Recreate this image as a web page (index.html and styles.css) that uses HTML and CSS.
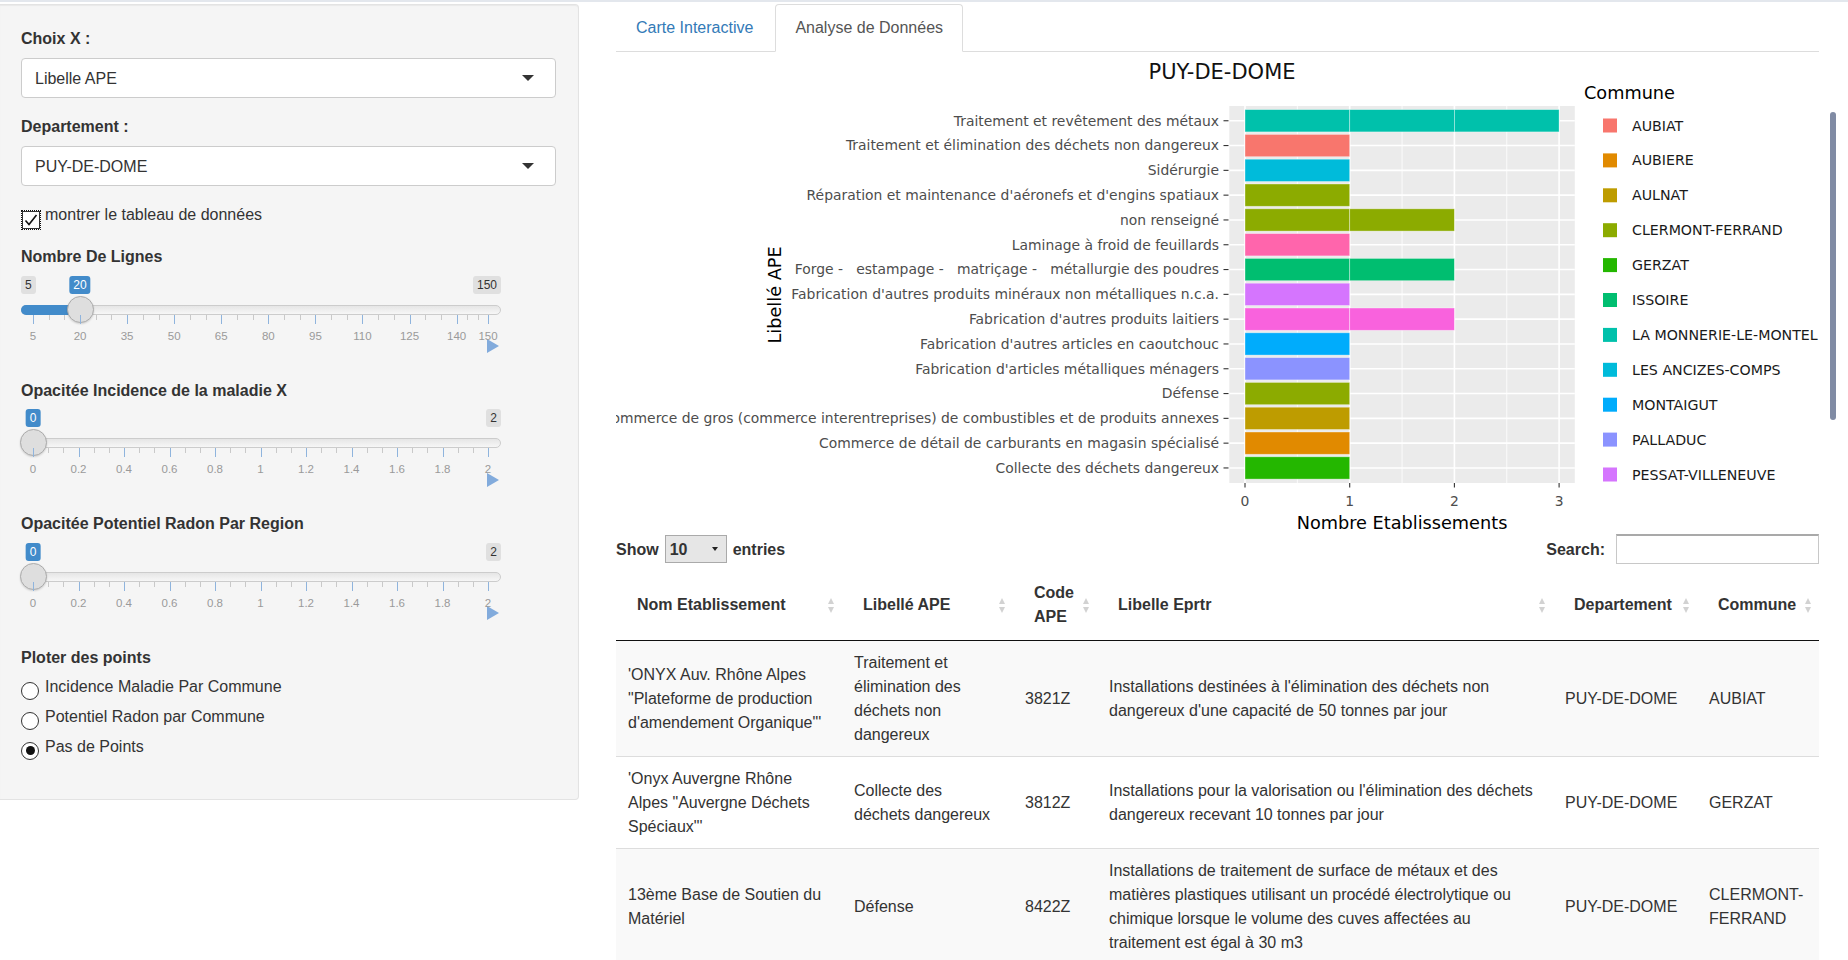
FILE: index.html
```html
<!DOCTYPE html>
<html lang="fr">
<head>
<meta charset="utf-8">
<title>Analyse de Données</title>
<link rel="stylesheet" href="styles.css">
</head>
<body>
<div class="page">
  <aside class="sidebar">
    <div class="fg">
      <div class="ctl-label">Choix X :</div>
      <div class="select"><span>Libelle APE</span><i class="caret"></i></div>
    </div>
    <div class="fg">
      <div class="ctl-label">Departement :</div>
      <div class="select"><span>PUY-DE-DOME</span><i class="caret"></i></div>
    </div>
    <div class="check-row">
      <span class="cbox"><svg width="16" height="16" viewBox="0 0 16 16"><path d="M2.5 8.5 L6 12.5 L13.5 3" fill="none" stroke="#111" stroke-width="1.6"/></svg></span>
      <span>montrer le tableau de données</span>
    </div>

    <div class="slider-group">
      <div class="ctl-label">Nombre De Lignes</div>
      <div class="irs">
        <span class="irs-min">5</span>
        <span class="irs-max">150</span>
        <span class="irs-line"></span>
        <span class="irs-bar" style="width:59px"></span>
        <span class="irs-single" style="left:59px">20</span>
        <span class="irs-handle" style="left:45.5px"></span>
        <div class="irs-grid">
          <i class="pol big" style="left:0%"></i><span class="gt" style="left:0%">5</span>
          <i class="pol" style="left:3.448%"></i><i class="pol" style="left:6.897%"></i>
          <i class="pol big" style="left:10.345%"></i><span class="gt" style="left:10.345%">20</span>
          <i class="pol" style="left:13.793%"></i><i class="pol" style="left:17.241%"></i>
          <i class="pol big" style="left:20.69%"></i><span class="gt" style="left:20.69%">35</span>
          <i class="pol" style="left:24.138%"></i><i class="pol" style="left:27.586%"></i>
          <i class="pol big" style="left:31.034%"></i><span class="gt" style="left:31.034%">50</span>
          <i class="pol" style="left:34.483%"></i><i class="pol" style="left:37.931%"></i>
          <i class="pol big" style="left:41.379%"></i><span class="gt" style="left:41.379%">65</span>
          <i class="pol" style="left:44.828%"></i><i class="pol" style="left:48.276%"></i>
          <i class="pol big" style="left:51.724%"></i><span class="gt" style="left:51.724%">80</span>
          <i class="pol" style="left:55.172%"></i><i class="pol" style="left:58.621%"></i>
          <i class="pol big" style="left:62.069%"></i><span class="gt" style="left:62.069%">95</span>
          <i class="pol" style="left:65.517%"></i><i class="pol" style="left:68.966%"></i>
          <i class="pol big" style="left:72.414%"></i><span class="gt" style="left:72.414%">110</span>
          <i class="pol" style="left:75.862%"></i><i class="pol" style="left:79.31%"></i>
          <i class="pol big" style="left:82.759%"></i><span class="gt" style="left:82.759%">125</span>
          <i class="pol" style="left:86.207%"></i><i class="pol" style="left:89.655%"></i>
          <i class="pol big" style="left:93.103%"></i><span class="gt" style="left:93.103%">140</span>
          <i class="pol" style="left:95.402%"></i><i class="pol" style="left:97.701%"></i>
          <i class="pol big" style="left:100%"></i><span class="gt" style="left:100%">150</span>
        </div>
      </div>
      <div class="play"><svg width="12" height="14" viewBox="0 0 12 14"><path d="M0 0 L12 7 L0 14 Z"/></svg></div>
    </div>

    <div class="slider-group">
      <div class="ctl-label">Opacitée Incidence de la maladie X</div>
      <div class="irs">
        <span class="irs-max">2</span>
        <span class="irs-line"></span>
        <span class="irs-single" style="left:12px">0</span>
        <span class="irs-handle" style="left:-1.5px"></span>
        <div class="irs-grid">
          <i class="pol big" style="left:0%"></i><span class="gt" style="left:0%">0</span>
          <i class="pol" style="left:3.333%"></i><i class="pol" style="left:6.667%"></i>
          <i class="pol big" style="left:10%"></i><span class="gt" style="left:10%">0.2</span>
          <i class="pol" style="left:13.333%"></i><i class="pol" style="left:16.667%"></i>
          <i class="pol big" style="left:20%"></i><span class="gt" style="left:20%">0.4</span>
          <i class="pol" style="left:23.333%"></i><i class="pol" style="left:26.667%"></i>
          <i class="pol big" style="left:30%"></i><span class="gt" style="left:30%">0.6</span>
          <i class="pol" style="left:33.333%"></i><i class="pol" style="left:36.667%"></i>
          <i class="pol big" style="left:40%"></i><span class="gt" style="left:40%">0.8</span>
          <i class="pol" style="left:43.333%"></i><i class="pol" style="left:46.667%"></i>
          <i class="pol big" style="left:50%"></i><span class="gt" style="left:50%">1</span>
          <i class="pol" style="left:53.333%"></i><i class="pol" style="left:56.667%"></i>
          <i class="pol big" style="left:60%"></i><span class="gt" style="left:60%">1.2</span>
          <i class="pol" style="left:63.333%"></i><i class="pol" style="left:66.667%"></i>
          <i class="pol big" style="left:70%"></i><span class="gt" style="left:70%">1.4</span>
          <i class="pol" style="left:73.333%"></i><i class="pol" style="left:76.667%"></i>
          <i class="pol big" style="left:80%"></i><span class="gt" style="left:80%">1.6</span>
          <i class="pol" style="left:83.333%"></i><i class="pol" style="left:86.667%"></i>
          <i class="pol big" style="left:90%"></i><span class="gt" style="left:90%">1.8</span>
          <i class="pol" style="left:93.333%"></i><i class="pol" style="left:96.667%"></i>
          <i class="pol big" style="left:100%"></i><span class="gt" style="left:100%">2</span>
        </div>
      </div>
      <div class="play"><svg width="12" height="14" viewBox="0 0 12 14"><path d="M0 0 L12 7 L0 14 Z"/></svg></div>
    </div>

    <div class="slider-group">
      <div class="ctl-label">Opacitée Potentiel Radon Par Region</div>
      <div class="irs">
        <span class="irs-max">2</span>
        <span class="irs-line"></span>
        <span class="irs-single" style="left:12px">0</span>
        <span class="irs-handle" style="left:-1.5px"></span>
        <div class="irs-grid">
          <i class="pol big" style="left:0%"></i><span class="gt" style="left:0%">0</span>
          <i class="pol" style="left:3.333%"></i><i class="pol" style="left:6.667%"></i>
          <i class="pol big" style="left:10%"></i><span class="gt" style="left:10%">0.2</span>
          <i class="pol" style="left:13.333%"></i><i class="pol" style="left:16.667%"></i>
          <i class="pol big" style="left:20%"></i><span class="gt" style="left:20%">0.4</span>
          <i class="pol" style="left:23.333%"></i><i class="pol" style="left:26.667%"></i>
          <i class="pol big" style="left:30%"></i><span class="gt" style="left:30%">0.6</span>
          <i class="pol" style="left:33.333%"></i><i class="pol" style="left:36.667%"></i>
          <i class="pol big" style="left:40%"></i><span class="gt" style="left:40%">0.8</span>
          <i class="pol" style="left:43.333%"></i><i class="pol" style="left:46.667%"></i>
          <i class="pol big" style="left:50%"></i><span class="gt" style="left:50%">1</span>
          <i class="pol" style="left:53.333%"></i><i class="pol" style="left:56.667%"></i>
          <i class="pol big" style="left:60%"></i><span class="gt" style="left:60%">1.2</span>
          <i class="pol" style="left:63.333%"></i><i class="pol" style="left:66.667%"></i>
          <i class="pol big" style="left:70%"></i><span class="gt" style="left:70%">1.4</span>
          <i class="pol" style="left:73.333%"></i><i class="pol" style="left:76.667%"></i>
          <i class="pol big" style="left:80%"></i><span class="gt" style="left:80%">1.6</span>
          <i class="pol" style="left:83.333%"></i><i class="pol" style="left:86.667%"></i>
          <i class="pol big" style="left:90%"></i><span class="gt" style="left:90%">1.8</span>
          <i class="pol" style="left:93.333%"></i><i class="pol" style="left:96.667%"></i>
          <i class="pol big" style="left:100%"></i><span class="gt" style="left:100%">2</span>
        </div>
      </div>
      <div class="play"><svg width="12" height="14" viewBox="0 0 12 14"><path d="M0 0 L12 7 L0 14 Z"/></svg></div>
    </div>

    <div class="radio-group">
      <div class="ctl-label radio-title">Ploter des points</div>
      <div class="radio-row"><span class="rdot"></span><span>Incidence Maladie Par Commune</span></div>
      <div class="radio-row"><span class="rdot"></span><span>Potentiel Radon par Commune</span></div>
      <div class="radio-row"><span class="rdot on"></span><span>Pas de Points</span></div>
    </div>
  </aside>

  <main class="main">
    <ul class="tabs">
      <li class="tab">Carte Interactive</li>
      <li class="tab active">Analyse de Données</li>
    </ul>

    <svg class="plot" width="1232" height="482" viewBox="616 52 1232 482">
      <text class="ptitle" x="1222" y="79" text-anchor="middle">PUY-DE-DOME</text>
      <rect x="1229.3" y="106" width="345.5" height="377" fill="#EBEBEB"/>
      <g stroke="#ffffff" stroke-width="0.8">
        <line x1="1297.35" y1="106" x2="1297.35" y2="483"/>
        <line x1="1402.05" y1="106" x2="1402.05" y2="483"/>
        <line x1="1506.75" y1="106" x2="1506.75" y2="483"/>
      </g>
      <g stroke="#ffffff" stroke-width="1.6">
        <line x1="1245" y1="106" x2="1245" y2="483"/>
        <line x1="1349.7" y1="106" x2="1349.7" y2="483"/>
        <line x1="1454.4" y1="106" x2="1454.4" y2="483"/>
        <line x1="1559.1" y1="106" x2="1559.1" y2="483"/>
        <line x1="1229.3" y1="120.75" x2="1574.8" y2="120.75"/>
        <line x1="1229.3" y1="145.55" x2="1574.8" y2="145.55"/>
        <line x1="1229.3" y1="170.35" x2="1574.8" y2="170.35"/>
        <line x1="1229.3" y1="195.15" x2="1574.8" y2="195.15"/>
        <line x1="1229.3" y1="219.95" x2="1574.8" y2="219.95"/>
        <line x1="1229.3" y1="244.75" x2="1574.8" y2="244.75"/>
        <line x1="1229.3" y1="269.55" x2="1574.8" y2="269.55"/>
        <line x1="1229.3" y1="294.35" x2="1574.8" y2="294.35"/>
        <line x1="1229.3" y1="319.15" x2="1574.8" y2="319.15"/>
        <line x1="1229.3" y1="343.95" x2="1574.8" y2="343.95"/>
        <line x1="1229.3" y1="368.75" x2="1574.8" y2="368.75"/>
        <line x1="1229.3" y1="393.55" x2="1574.8" y2="393.55"/>
        <line x1="1229.3" y1="418.35" x2="1574.8" y2="418.35"/>
        <line x1="1229.3" y1="443.15" x2="1574.8" y2="443.15"/>
        <line x1="1229.3" y1="467.95" x2="1574.8" y2="467.95"/>
      </g>
      <g class="bars" stroke="rgba(255,255,255,0.45)" stroke-width="0.8">
        <rect x="1245" y="109.6" width="104.7" height="22.3" fill="#00C1AB"/>
        <rect x="1349.7" y="109.6" width="104.7" height="22.3" fill="#00C1AB"/>
        <rect x="1454.4" y="109.6" width="104.7" height="22.3" fill="#00C1AB"/>
        <rect x="1245" y="134.4" width="104.7" height="22.3" fill="#F8766D"/>
        <rect x="1245" y="159.2" width="104.7" height="22.3" fill="#00BBDA"/>
        <rect x="1245" y="184.0" width="104.7" height="22.3" fill="#8CAB00"/>
        <rect x="1245" y="208.8" width="104.7" height="22.3" fill="#8CAB00"/>
        <rect x="1349.7" y="208.8" width="104.7" height="22.3" fill="#8CAB00"/>
        <rect x="1245" y="233.6" width="104.7" height="22.3" fill="#FF65AC"/>
        <rect x="1245" y="258.4" width="104.7" height="22.3" fill="#00BE70"/>
        <rect x="1349.7" y="258.4" width="104.7" height="22.3" fill="#00BE70"/>
        <rect x="1245" y="283.2" width="104.7" height="22.3" fill="#D575FE"/>
        <rect x="1245" y="308.0" width="104.7" height="22.3" fill="#F962DD"/>
        <rect x="1349.7" y="308.0" width="104.7" height="22.3" fill="#F962DD"/>
        <rect x="1245" y="332.8" width="104.7" height="22.3" fill="#00ACFC"/>
        <rect x="1245" y="357.6" width="104.7" height="22.3" fill="#8B93FF"/>
        <rect x="1245" y="382.4" width="104.7" height="22.3" fill="#8CAB00"/>
        <rect x="1245" y="407.2" width="104.7" height="22.3" fill="#BE9C00"/>
        <rect x="1245" y="432.0" width="104.7" height="22.3" fill="#E18A00"/>
        <rect x="1245" y="456.8" width="104.7" height="22.3" fill="#24B700"/>
      </g>
      <g stroke="#333333" stroke-width="1.1">
        <line x1="1223.5" y1="120.75" x2="1228.5" y2="120.75"/>
        <line x1="1223.5" y1="145.55" x2="1228.5" y2="145.55"/>
        <line x1="1223.5" y1="170.35" x2="1228.5" y2="170.35"/>
        <line x1="1223.5" y1="195.15" x2="1228.5" y2="195.15"/>
        <line x1="1223.5" y1="219.95" x2="1228.5" y2="219.95"/>
        <line x1="1223.5" y1="244.75" x2="1228.5" y2="244.75"/>
        <line x1="1223.5" y1="269.55" x2="1228.5" y2="269.55"/>
        <line x1="1223.5" y1="294.35" x2="1228.5" y2="294.35"/>
        <line x1="1223.5" y1="319.15" x2="1228.5" y2="319.15"/>
        <line x1="1223.5" y1="343.95" x2="1228.5" y2="343.95"/>
        <line x1="1223.5" y1="368.75" x2="1228.5" y2="368.75"/>
        <line x1="1223.5" y1="393.55" x2="1228.5" y2="393.55"/>
        <line x1="1223.5" y1="418.35" x2="1228.5" y2="418.35"/>
        <line x1="1223.5" y1="443.15" x2="1228.5" y2="443.15"/>
        <line x1="1223.5" y1="467.95" x2="1228.5" y2="467.95"/>
        <line x1="1245" y1="483" x2="1245" y2="487.5"/>
        <line x1="1349.7" y1="483" x2="1349.7" y2="487.5"/>
        <line x1="1454.4" y1="483" x2="1454.4" y2="487.5"/>
        <line x1="1559.1" y1="483" x2="1559.1" y2="487.5"/>
      </g>
      <g class="ytick" text-anchor="end">
        <text x="1219" y="125.55">Traitement et revêtement des métaux</text>
        <text x="1219" y="150.35">Traitement et élimination des déchets non dangereux</text>
        <text x="1219" y="175.15">Sidérurgie</text>
        <text x="1219" y="199.95">Réparation et maintenance d'aéronefs et d'engins spatiaux</text>
        <text x="1219" y="224.75">non renseigné</text>
        <text x="1219" y="249.55">Laminage à froid de feuillards</text>
        <text x="1219" y="274.35" class="pre">Forge -   estampage -   matriçage -   métallurgie des poudres</text>
        <text x="1219" y="299.15">Fabrication d'autres produits minéraux non métalliques n.c.a.</text>
        <text x="1219" y="323.95">Fabrication d'autres produits laitiers</text>
        <text x="1219" y="348.75">Fabrication d'autres articles en caoutchouc</text>
        <text x="1219" y="373.55">Fabrication d'articles métalliques ménagers</text>
        <text x="1219" y="398.35">Défense</text>
        <text x="1219" y="423.15">Commerce de gros (commerce interentreprises) de combustibles et de produits annexes</text>
        <text x="1219" y="447.95">Commerce de détail de carburants en magasin spécialisé</text>
        <text x="1219" y="472.75">Collecte des déchets dangereux</text>
      </g>
      <g class="ytick" text-anchor="middle">
        <text x="1245" y="506">0</text>
        <text x="1349.7" y="506">1</text>
        <text x="1454.4" y="506">2</text>
        <text x="1559.1" y="506">3</text>
      </g>
      <text class="atitle" x="1402" y="529" text-anchor="middle">Nombre Etablissements</text>
      <text class="atitle" transform="translate(781 295) rotate(-90)" text-anchor="middle">Libellé APE</text>
      <text class="atitle" x="1584" y="99">Commune</text>
      <g>
        <rect x="1603" y="118.5" width="14" height="14" fill="#F8766D"/>
        <rect x="1603" y="153.4" width="14" height="14" fill="#E18A00"/>
        <rect x="1603" y="188.3" width="14" height="14" fill="#BE9C00"/>
        <rect x="1603" y="223.2" width="14" height="14" fill="#8CAB00"/>
        <rect x="1603" y="258.1" width="14" height="14" fill="#24B700"/>
        <rect x="1603" y="293.0" width="14" height="14" fill="#00BE70"/>
        <rect x="1603" y="327.9" width="14" height="14" fill="#00C1AB"/>
        <rect x="1603" y="362.8" width="14" height="14" fill="#00BBDA"/>
        <rect x="1603" y="397.7" width="14" height="14" fill="#00ACFC"/>
        <rect x="1603" y="432.6" width="14" height="14" fill="#8B93FF"/>
        <rect x="1603" y="467.5" width="14" height="14" fill="#D575FE"/>
      </g>
      <g class="legend">
        <text x="1632" y="130.5">AUBIAT</text>
        <text x="1632" y="165.4">AUBIERE</text>
        <text x="1632" y="200.3">AULNAT</text>
        <text x="1632" y="235.2">CLERMONT-FERRAND</text>
        <text x="1632" y="270.1">GERZAT</text>
        <text x="1632" y="305.0">ISSOIRE</text>
        <text x="1632" y="339.9">LA MONNERIE-LE-MONTEL</text>
        <text x="1632" y="374.8">LES ANCIZES-COMPS</text>
        <text x="1632" y="409.7">MONTAIGUT</text>
        <text x="1632" y="444.6">PALLADUC</text>
        <text x="1632" y="479.5">PESSAT-VILLENEUVE</text>
      </g>
      <rect x="1830" y="112" width="6" height="308" rx="3" fill="#808BA4"/>
    </svg>

    <div class="dt-top">
      <div class="dt-len">Show <span class="dt-select"><span>10</span><i class="mini-caret"></i></span> entries</div>
      <div class="dt-search">Search: <span class="dt-input"></span></div>
    </div>

    <table class="dt">
      <colgroup>
        <col style="width:226px"><col style="width:171px"><col style="width:84px"><col style="width:456px"><col style="width:144px"><col style="width:122px">
      </colgroup>
      <thead>
        <tr>
          <th><div class="th-in"><span>Nom Etablissement</span><i class="sort"></i></div></th>
          <th><div class="th-in"><span>Libellé APE</span><i class="sort"></i></div></th>
          <th><div class="th-in"><span>Code APE</span><i class="sort"></i></div></th>
          <th><div class="th-in"><span>Libelle Eprtr</span><i class="sort"></i></div></th>
          <th><div class="th-in"><span>Departement</span><i class="sort"></i></div></th>
          <th><div class="th-in"><span>Commune</span><i class="sort"></i></div></th>
        </tr>
      </thead>
      <tbody>
        <tr class="odd">
          <td>'ONYX Auv. Rhône Alpes "Plateforme de production d'amendement Organique"'</td>
          <td>Traitement et élimination des déchets non dangereux</td>
          <td>3821Z</td>
          <td>Installations destinées à l'élimination des déchets non dangereux d'une capacité de 50 tonnes par jour</td>
          <td>PUY-DE-DOME</td>
          <td>AUBIAT</td>
        </tr>
        <tr>
          <td>'Onyx Auvergne Rhône Alpes "Auvergne Déchets Spéciaux"'</td>
          <td>Collecte des déchets dangereux</td>
          <td>3812Z</td>
          <td>Installations pour la valorisation ou l'élimination des déchets dangereux recevant 10 tonnes par jour</td>
          <td>PUY-DE-DOME</td>
          <td>GERZAT</td>
        </tr>
        <tr class="odd">
          <td>13ème Base de Soutien du Matériel</td>
          <td>Défense</td>
          <td>8422Z</td>
          <td>Installations de traitement de surface de métaux et des matières plastiques utilisant un procédé électrolytique ou chimique lorsque le volume des cuves affectées au traitement est égal à 30 m3</td>
          <td>PUY-DE-DOME</td>
          <td>CLERMONT-FERRAND</td>
        </tr>
      </tbody>
    </table>
  </main>
</div>
</body>
</html>
```

FILE: styles.css
```css
* { box-sizing: border-box; }
html { overflow: hidden; }
body {
  margin: 0;
  font-family: "Liberation Sans", Arial, sans-serif;
  font-size: 16px;
  line-height: 23px;
  color: #333;
  background: #fff;
  border-top: 2px solid #e3e7ed;
  height: 960px;
  overflow: hidden;
}
.page { display: flex; align-items: flex-start; padding-top: 2px; }

/* Sidebar */
.sidebar {
  width: 579px;
  flex: none;
  background: #f5f5f5;
  border: 1px solid #e3e3e3;
  border-left: none;
  border-radius: 0 4px 4px 0;
  box-shadow: inset 0 1px 1px rgba(0,0,0,.05);
  padding: 22px 21px 34px 21px;
}
.fg { margin-bottom: 17px; }
.ctl-label { font-weight: bold; margin-bottom: 8px; height: 23px; white-space: nowrap; }
.select {
  width: 535px;
  height: 40px;
  background: #fff;
  border: 1px solid #ccc;
  border-radius: 4px;
  display: flex;
  align-items: center;
  justify-content: space-between;
  padding: 0 21px 0 13px;
}
.caret {
  width: 0; height: 0;
  border-left: 6px solid transparent;
  border-right: 6px solid transparent;
  border-top: 6px solid #333;
}
.check-row { display: flex; align-items: flex-start; gap: 4px; margin-bottom: 19px; height: 23px; }
.cbox {
  flex: none;
  width: 20px; height: 20px;
  margin-top: 7px;
  border: 1px dotted #111;
  padding: 1px;
  display: flex; align-items: center; justify-content: center;
  background: #fff;
  box-shadow: inset 0 0 0 1px #333;
}

/* Sliders */
.slider-group { margin-bottom: 25.5px; }
.slider-group .ctl-label { margin-bottom: 7.5px; }
.irs { position: relative; width: 480px; height: 63.5px; }
.irs-min, .irs-max, .irs-single {
  position: absolute; top: 0;
  font-size: 12px; line-height: 16px;
  padding: 1px 4px;
  border-radius: 3px;
}
.irs-min { left: 0; background: #e0e0e0; color: #333; }
.irs-max { right: 0; background: #e0e0e0; color: #333; }
.irs-single { background: #428bca; color: #fff; transform: translateX(-50%); }
.irs-line {
  position: absolute; left: 0; right: 0; top: 29px; height: 10px;
  border: 1px solid #ccc; border-radius: 16px;
  background: linear-gradient(to bottom, #dddddd -50%, #ffffff 150%);
}
.irs-bar {
  position: absolute; left: 0; top: 29px; height: 10px;
  background: #428bca; border-radius: 16px 0 0 16px;
}
.irs-handle {
  position: absolute; top: 20px; width: 27px; height: 27px;
  border-radius: 50%;
  background: #dedede;
  border: 1px solid #ababab;
  box-shadow: 0 1px 2px rgba(0,0,0,.15);
}
.irs-grid { position: absolute; left: 12px; width: 455px; top: 39px; height: 24px; }
.pol { position: absolute; top: 0; width: 1px; height: 5px; background: #c9c9c9; }
.pol.big { height: 9px; background: #8fb4dd; }
.gt {
  position: absolute; top: 14px;
  font-size: 11.5px; line-height: 14px; color: #9a9a9a;
  transform: translateX(-50%);
}
.play { width: 480px; height: 14px; display: flex; justify-content: flex-end; padding-right: 2px; }
.play svg { fill: #82abdc; display: block; }

/* Radios */
.radio-title { margin-bottom: 6px; }
.radio-row { display: flex; align-items: flex-start; gap: 6px; margin-bottom: 7px; white-space: nowrap; height: 23px; }
.rdot {
  flex: none;
  width: 18px; height: 18px;
  margin-top: 7px;
  border-radius: 50%;
  border: 1.5px solid #333;
  background: #fff;
  display: flex; align-items: center; justify-content: center;
}
.rdot.on::after { content: ""; width: 9px; height: 9px; border-radius: 50%; background: #111; }

/* Main */
.main { margin-left: 37px; width: 1203px; flex: none; }
.tabs { display: flex; list-style: none; margin: 0; padding: 0; border-bottom: 1px solid #ddd; }
.tab {
  margin-bottom: -1px; margin-right: 2px;
  padding: 11px 19px 12px;
  line-height: 23px;
  border: 1px solid transparent;
  border-radius: 4px 4px 0 0;
  color: #337ab7;
}
.tab.active { color: #555; background: #fff; border-color: #ddd #ddd transparent; }

.plot { display: block; }
.ptitle { font-family: "DejaVu Sans", Verdana, sans-serif; font-size: 21px; fill: #111; }
.ytick text, .ytick { font-family: "DejaVu Sans", Verdana, sans-serif; font-size: 13.9px; fill: #4d4d4d; }
.pre { white-space: pre; }
.atitle { font-family: "DejaVu Sans", Verdana, sans-serif; font-size: 17.7px; fill: #000; }
.legend { font-family: "DejaVu Sans", Verdana, sans-serif; font-size: 14.2px; fill: #1a1a1a; }

/* DataTable */
.dt-top {
  display: flex; justify-content: space-between; align-items: center;
  height: 30px; font-weight: bold;
}
.dt-len, .dt-search { display: flex; align-items: center; gap: 6px; }
.dt-search { gap: 11px; }
.dt-select {
  width: 62px; height: 28px;
  background: #e6e6e6;
  border: 1px solid #aaa;
  display: flex; align-items: center; justify-content: space-between;
  padding: 0 8px 0 4px;
}
.mini-caret {
  width: 0; height: 0;
  border-left: 3px solid transparent;
  border-right: 3px solid transparent;
  border-top: 4px solid #222;
}
.dt-input {
  width: 203px; height: 30px;
  border: 1px solid #c8c8c8;
  border-top: 2px solid #a9a9a9;
  background: #fff;
}
.dt { width: 1203px; border-collapse: collapse; table-layout: fixed; margin-top: 6px; }
.dt th {
  padding: 11px 7px 11px 21px;
  line-height: 24px;
  text-align: left;
  font-weight: bold;
  border-bottom: 1px solid #111;
  vertical-align: middle;
}
.th-in { display: flex; align-items: center; justify-content: space-between; gap: 6px; }
.sort { flex: none; width: 8px; display: flex; flex-direction: column; align-items: center; gap: 3px; }
.sort::before, .sort::after {
  content: ""; width: 0; height: 0;
  border-left: 3.5px solid transparent;
  border-right: 3.5px solid transparent;
}
.sort::before { border-bottom: 6px solid #d2d2d2; }
.sort::after { border-top: 6px solid #d2d2d2; }
.dt td {
  padding: 10px 14px 9px 12px;
  line-height: 24px;
  vertical-align: middle;
  border-top: 1px solid #ddd;
}
.dt tbody tr:first-child td { border-top: none; }
.dt tr.odd td { background: #f9f9f9; }
```
